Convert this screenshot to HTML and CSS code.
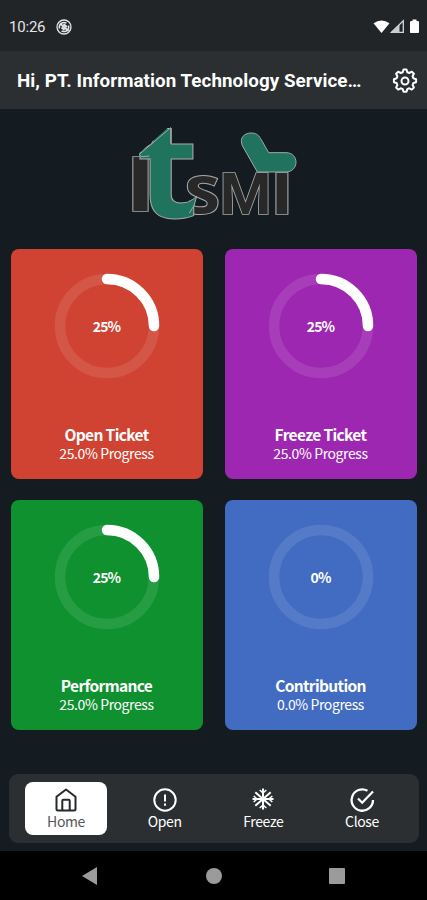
FILE: index.html
```html
<!DOCTYPE html>
<html lang="en">
<head>
<meta charset="UTF-8">
<meta name="viewport" content="width=device-width, initial-scale=1.0">
<title>ITSMI</title>
<link rel="stylesheet" href="styles.css">
</head>
<body>
    <!-- Status Bar -->
    <div class="status-bar">
        <span class="time">10:26</span>
        <svg class="status-logo" width="16" height="16" viewBox="0 0 16 16" fill="none" stroke="#e4e5e6">
            <circle cx="8" cy="8" r="7" stroke-width="1.3"/>
            <path d="M3.500 9.500a4.700 4.700 0 0 1 7-5.300M12.500 6.500a4.700 4.700 0 0 1-7 5.300" stroke-width="1.500"/>
            <path d="M4 4.500l8.500 7.500M5.500 8.500l3 2.500M7.500 5l3.500 3" stroke-width="1.700"/>
        </svg>
        <svg class="status-icons" width="48" height="16" viewBox="0 0 48 16">
            <path d="M0.500 4.200Q8.500-1.200 16.500 4.200L8.500 14z" fill="#fff"/>
            <path d="M18.500 13.300L30.300 1.800V13.300z" fill="none" stroke="#d5d7d8" stroke-width="1.300"/>
            <path d="M18 14L26.500 5.700V14z" fill="#c9cbcc"/>
            <path d="M39.500 0.500h4v1.600h1.300q1.200 0 1.200 1.200v9.600q0 1.200-1.200 1.200h-6.600q-1.200 0-1.200-1.200V3.300q0-1.200 1.200-1.200h1.300z" fill="#fff"/>
        </svg>
    </div>

    <!-- Header Section -->
    <header class="header">
        <h1 class="heading">Hi, PT. Information Technology Service…</h1>
        <svg class="settings" width="26" height="26" viewBox="0 0 26 26" fill="none" stroke="#fff" stroke-width="2" stroke-linejoin="round">
            <circle cx="13" cy="13" r="3.500"/>
            <path d="M10.700 4.200L11.500 1.500h3l.8 2.700 2 .8 2.500-1.300 2.100 2.100-1.300 2.500.8 2 2.700.9v3l-2.700.8-.8 2 1.300 2.500-2.100 2.100-2.500-1.300-2 .8-.8 2.700h-3l-.8-2.700-2-.8-2.500 1.300-2.100-2.100 1.300-2.500-.8-2-2.700-.8v-3l2.700-.9.8-2-1.300-2.500 2.100-2.100 2.500 1.300z"/>
        </svg>
    </header>

    <main class="content">
        <svg class="logo" width="190" height="115" viewBox="0 0 570 345">
            <clipPath id="slope">
                <path d="M153 30L50 121V340H300V30z"/>
            </clipPath>
            <g class="logo-dark">
                <text class="block" transform="translate(19 288) scale(1.28 1)" font-size="228">I</text>
                <text transform="translate(192 296) scale(1.05 1)" font-size="212">s</text>
                <text class="block" transform="translate(299 296) scale(1.03 1)" font-size="172">M</text>
                <text class="block" transform="translate(453 296) scale(1.3 1)" font-size="172">I</text>
            </g>
            <g class="logo-green">
                <g clip-path="url(#slope)">
                    <text transform="translate(50 310) scale(1.05 1)" font-size="405">t</text>
                </g>
                <path class="fill-only" d="M152 92V38L58 119L94 123L110 135H145V92z"/>
                <path class="edge" d="M152 86V38L58 118L64 125L88 123"/>
                <path class="fill-only" d="M180 268Q212 266 230 244Q224 280 200 296L180 300z"/>
                <path class="edge" d="M205 260Q220 254 230 244Q225 275 208 294"/>
                <path d="M412 171L367 92C357 68 374 54 393 54C407 54 415 59 422 71L446 113H498C518 113 528 127 528 142C528 158 515 171 498 171z"/>
            </g>
        </svg>

        <!-- Ticket Cards -->
        <div class="cards">
            <div class="card open">
                <div class="ring">
                    <svg width="106" height="106" viewBox="0 0 106 106">
                        <circle class="track" cx="53" cy="53" r="47"/>
                        <path class="bar" d="M53 6a47 47 0 0 1 47 47"/>
                    </svg>
                    <span class="percent">25%</span>
                </div>
                <h2 class="card-name">Open Ticket</h2>
                <p class="progress">25.0% Progress</p>
            </div>
            <div class="card freeze">
                <div class="ring">
                    <svg width="106" height="106" viewBox="0 0 106 106">
                        <circle class="track" cx="53" cy="53" r="47"/>
                        <path class="bar" d="M53 6a47 47 0 0 1 47 47"/>
                    </svg>
                    <span class="percent">25%</span>
                </div>
                <h2 class="card-name">Freeze Ticket</h2>
                <p class="progress">25.0% Progress</p>
            </div>
            <div class="card performance">
                <div class="ring">
                    <svg width="106" height="106" viewBox="0 0 106 106">
                        <circle class="track" cx="53" cy="53" r="47"/>
                        <path class="bar" d="M53 6a47 47 0 0 1 47 47"/>
                    </svg>
                    <span class="percent">25%</span>
                </div>
                <h2 class="card-name">Performance</h2>
                <p class="progress">25.0% Progress</p>
            </div>
            <div class="card contribution">
                <div class="ring">
                    <svg width="106" height="106" viewBox="0 0 106 106">
                        <circle class="track" cx="53" cy="53" r="47"/>
                    </svg>
                    <span class="percent">0%</span>
                </div>
                <h2 class="card-name">Contribution</h2>
                <p class="progress">0.0% Progress</p>
            </div>
        </div>

        <!-- Bottom Menu -->
        <nav class="menu">
            <a class="menu-item active">
                <svg width="26" height="26" viewBox="0 0 26 26" fill="none" stroke="#25292b" stroke-width="2" stroke-linejoin="round">
                    <path d="M3.500 9.800L13 2.500l9.500 7.300V22q0 1.500-1.500 1.500H5q-1.500 0-1.500-1.500z"/>
                    <path d="M9.300 23.500V13.700q0-1 1-1h5.400q1 0 1 1v9.800"/>
                </svg>
                <span>Home</span>
            </a>
            <a class="menu-item">
                <svg width="26" height="26" viewBox="0 0 26 26" fill="none" stroke="#fff" stroke-width="2">
                    <circle cx="13" cy="13" r="10.700"/>
                    <path d="M13 7.500v7M13 16.500v2.200"/>
                </svg>
                <span>Open</span>
            </a>
            <a class="menu-item">
                <svg width="26" height="26" viewBox="0 0 26 26" fill="none" stroke="#fff" stroke-width="2">
                    <path d="M13 1.500v21M2.500 12h21M5.300 5.300l15.400 13.400M20.700 5.300L5.300 18.700"/>
                    <path d="M9.700 3L13 6l3.300-3M9.700 21L13 18l3.300 3M3.700 9L7 12l-3.300 3M22.300 9L19 12l3.300 3" stroke-width="1.500"/>
                </svg>
                <span>Freeze</span>
            </a>
            <a class="menu-item">
                <svg width="26" height="26" viewBox="0 0 26 26" fill="none" stroke="#fff" stroke-width="2.300">
                    <path d="M18.500 3.700A10.700 10.700 0 1 0 24 13"/>
                    <path d="M9 11.500l4.200 4.200L24 4.500"/>
                </svg>
                <span>Close</span>
            </a>
        </nav>
    </main>

    <!-- System Buttons -->
    <footer class="system-nav">
        <svg width="18" height="20" viewBox="0 0 18 20" fill="#9b9b9b"><path d="M1 10L16 1v18z"/></svg>
        <svg width="18" height="20" viewBox="0 0 18 20" fill="#9b9b9b"><circle cx="9" cy="10" r="8"/></svg>
        <svg width="18" height="20" viewBox="0 0 18 20" fill="#9b9b9b"><rect x="1" y="2" width="16" height="16" rx="1"/></svg>
    </footer>
</body>
</html>
```

FILE: styles.css
```css
* {
    box-sizing: border-box;
}

body {
    margin: 0;
    height: 900px;
    display: flex;
    flex-direction: column;
    overflow: hidden;
    background-color: #141c21;
    color: white;
    font-family: "Noto Sans CJK SC", "Noto Sans", sans-serif;
}

/* Status bar */
.status-bar {
    display: flex;
    align-items: center;
    height: 51px;
    padding: 2px 6px 0 9px;
    background-color: #212527;
    font-family: Roboto, sans-serif;
}

.time {
    width: 47px;
    font-size: 15px;
    letter-spacing: -0.2px;
    color: #e4e5e6;
}

.status-icons {
    margin-left: auto;
}

/* Header */
.header {
    display: flex;
    align-items: center;
    justify-content: space-between;
    height: 58px;
    padding: 2px 9px 0 17px;
    background-color: #2b2f31;
}

.heading {
    margin: 0;
    white-space: nowrap;
    font-family: Roboto, sans-serif;
    font-size: 18.8px;
    font-weight: bold;
    letter-spacing: 0.06px;
}

.content {
    display: flex;
    flex-direction: column;
    height: 742px;
    padding: 6px 9px 0;
}

/* Logo */
.logo {
    align-self: center;
    margin-right: -3px;
    overflow: visible;
    font-family: "Open Sans", sans-serif;
    font-weight: bold;
    stroke: #a3a9a8;
    stroke-width: 3px;
}

.logo .block {
    font-family: Roboto, sans-serif;
    stroke-width: 5px;
    paint-order: stroke;
}

.logo-dark {
    fill: #292829;
}

.logo-green {
    fill: #20745d;
}

.fill-only {
    stroke: none;
}

.edge {
    fill: none;
}

/* Cards */
.cards {
    display: grid;
    grid-template-columns: 192px 192px;
    gap: 21px 22px;
    margin: 19px 0 0 2px;
}

.card {
    display: flex;
    flex-direction: column;
    align-items: center;
    height: 230px;
    padding-top: 24px;
    border-radius: 8px;
}

.open {
    background-color: #d04333;
}

.freeze {
    background-color: #9d27b1;
}

.performance {
    background-color: #0e912e;
}

.contribution {
    background-color: #426cc2;
}

.ring {
    display: grid;
    place-items: center;
    height: 106px;
}

.ring svg,
.percent {
    grid-area: 1 / 1;
}

.track,
.bar {
    fill: none;
    stroke: white;
    stroke-width: 10.5px;
}

.track {
    stroke-opacity: 0.1;
}

.bar {
    stroke-linecap: round;
}

.percent {
    margin-right: 1px;
    font-size: 14px;
    font-weight: bold;
    letter-spacing: -0.9px;
}

.card-name {
    margin: 45px 1px 0 0;
    font-size: 15.5px;
    font-weight: bold;
    line-height: 20px;
    letter-spacing: -0.65px;
}

.progress {
    margin: 0 1px 0 0;
    font-size: 14px;
    line-height: 19px;
    letter-spacing: -0.4px;
}

/* Bottom menu */
.menu {
    display: flex;
    justify-content: space-between;
    height: 69px;
    margin-top: 44px;
    margin-right: -1px;
    padding: 8px 16px;
    border-radius: 9px;
    background-color: #2b2f31;
}

.menu-item {
    display: flex;
    flex-direction: column;
    align-items: center;
    width: 82px;
    height: 53px;
    padding-top: 5px;
    border-radius: 8px;
    font-size: 14px;
    line-height: 16px;
    letter-spacing: -0.4px;
}

.active {
    background-color: white;
    color: #55585a;
}

/* System buttons */
.system-nav {
    display: flex;
    justify-content: space-between;
    align-items: center;
    height: 49px;
    padding: 0 81px;
    background-color: black;
}
```
